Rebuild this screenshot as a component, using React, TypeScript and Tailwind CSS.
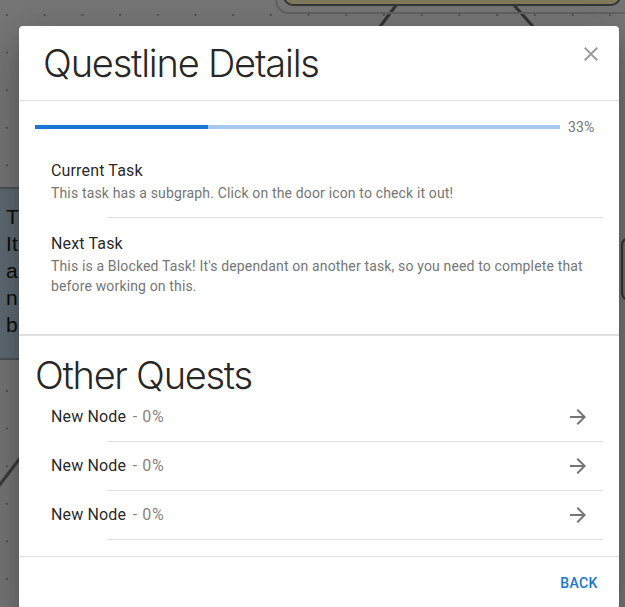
import type { ReactNode } from "react";

const CURRENT_TASKS = [
  {
    label: "Current Task",
    text: "This task has a subgraph. Click on the door icon to check it out!",
  },
  {
    label: "Next Task",
    text: "This is a Blocked Task! It's dependant on another task, so you need to complete that before working on this.",
  },
];

const OTHER_QUESTS = [
  { name: "New Node", progress: 0 },
  { name: "New Node", progress: 0 },
  { name: "New Node", progress: 0 },
];

function CloseIcon() {
  return (
    <svg viewBox="0 0 24 24" className="size-6 fill-[#9e9e9e]">
      <path d="M19 6.41 17.59 5 12 10.59 6.41 5 5 6.41 10.59 12 5 17.59 6.41 19 12 13.41 17.59 19 19 17.59 13.41 12z" />
    </svg>
  );
}

function ArrowIcon() {
  return (
    <svg viewBox="0 0 24 24" className="size-6 fill-[#757575]">
      <path d="m12 4-1.41 1.41L16.17 11H4v2h12.17l-5.58 5.59L12 20l8-8z" />
    </svg>
  );
}

function InsetDivider() {
  return <li className="ml-[72px] h-px bg-[#e0e0e0]" />;
}

function Canvas() {
  return (
    <>
      <svg className="absolute inset-0" width="625" height="607">
        <defs>
          <pattern id="dots" x="6" y="14" width="37.7" height="37.6" patternUnits="userSpaceOnUse">
            <circle cx="1" cy="1" r="1.1" fill="#4f4f4f" />
          </pattern>
        </defs>
        <rect width="625" height="607" fill="url(#dots)" />
        <line x1="397" y1="4" x2="370" y2="40" stroke="#333" strokeWidth="3" />
        <line x1="513" y1="4" x2="545" y2="40" stroke="#333" strokeWidth="3" />
        <line x1="-5" y1="491" x2="30" y2="445" stroke="#3a3a3a" strokeWidth="3" />
      </svg>
      {/* top node */}
      <div className="absolute left-[275px] top-[-40px] h-[54px] w-[362px] rounded-[14px] border-2 border-[#626262]" />
      <div className="absolute left-[283px] top-[-40px] h-[46px] w-[338px] rounded-[10px] border-2 border-[#363636] bg-[#7f7a5c]" />
      {/* right node */}
      <div className="absolute left-[621px] top-[237px] h-[64px] w-[40px] rounded-lg border-2 border-[#333] bg-[#6e6e6e]" />
      {/* left node */}
      <div className="absolute left-[-10px] top-[187px] h-[173px] w-[200px] border-y-2 border-[#4b545b] bg-[#5f6a72] pl-4 pt-[14px] font-['Liberation_Sans',Arial,sans-serif] text-[21px] leading-[27px] text-[#0b0d0e]">
        <div>T</div>
        <div>It</div>
        <div>a</div>
        <div>n</div>
        <div>b</div>
      </div>
    </>
  );
}

function Section({ children, className = "" }: { children: ReactNode; className?: string }) {
  return <div className={`border-[#e0e0e0] px-4 ${className}`}>{children}</div>;
}

export default function App() {
  const progress = 33;

  return (
    <div className="relative h-[607px] w-[625px] overflow-hidden bg-[#767676] font-['Roboto',sans-serif] tracking-[0.15px]">
      <Canvas />

      <div className="absolute left-[19px] top-[26px] w-[600px] rounded-[4px] bg-white shadow-[0_11px_15px_-7px_rgba(0,0,0,0.2),0_24px_38px_3px_rgba(0,0,0,0.14),0_9px_46px_8px_rgba(0,0,0,0.12)]">
        <div className="flex items-start justify-between border-b border-[#e0e0e0] py-4 pl-6 pr-4">
          <h2 className="font-['Inter',sans-serif] text-[38px] font-light leading-[42px] tracking-[-1.2px] text-[rgba(0,0,0,0.87)]">
            Questline Details
          </h2>
          <button type="button" className="flex size-6 items-center justify-center">
            <CloseIcon />
          </button>
        </div>

        <Section className="border-b py-4">
          <div className="flex h-5 items-center">
            <div className="mr-2 h-1 flex-1 overflow-hidden bg-[#a6c8ec]">
              <div className="h-full bg-[#1976d2]" style={{ width: `${progress}%` }} />
            </div>
            <div className="min-w-[35px] text-[14px] leading-5 text-[#757575]">{progress}%</div>
          </div>
          <ul className="py-2">
            {CURRENT_TASKS.map((task, i) => (
              <>
                <li key={task.label} className="px-4 py-2">
                  <div className="my-1.5">
                    <div className="text-[16px] leading-6 text-[rgba(0,0,0,0.87)]">{task.label}</div>
                    <div className="text-[14px] leading-5 text-[#767676]">{task.text}</div>
                  </div>
                </li>
                {i < CURRENT_TASKS.length - 1 && <InsetDivider key={`d${i}`} />}
              </>
            ))}
          </ul>
        </Section>

        <Section className="border-t border-b pb-2 pt-[21px]">
          <h3 className="font-['Inter',sans-serif] text-[38px] font-light leading-[36px] tracking-[-1.3px] text-[rgba(0,0,0,0.87)]">
            Other Quests
          </h3>
          <ul className="pb-2">
            {OTHER_QUESTS.map((quest, i) => (
              <>
                <li key={`q${i}`} className="flex items-center py-2 pl-4 pr-[13px]">
                  <div className="my-1 flex-1 text-[16px] leading-6 text-[rgba(0,0,0,0.87)]">
                    {quest.name}
                    <span className="ml-0.5 tracking-[0.6px] text-[#858585]"> - {quest.progress}%</span>
                  </div>
                  <ArrowIcon />
                </li>
                <InsetDivider key={`qd${i}`} />
              </>
            ))}
          </ul>
        </Section>

        <div className="flex justify-end p-2">
          <button
            type="button"
            className="h-[36px] min-w-16 px-2 text-[14px] font-medium uppercase tracking-[0.4px] text-[#1976d2]"
          >
            Back
          </button>
        </div>
      </div>
    </div>
  );
}
